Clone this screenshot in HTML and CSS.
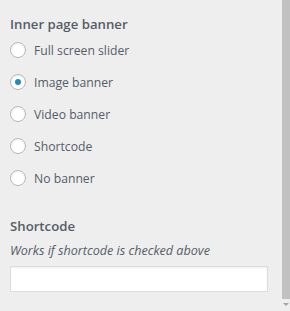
FILE: index.html
```html
<!DOCTYPE html>
<html>
<head>
<meta charset="utf-8">
<link rel="stylesheet" href="styles.css">
</head>
<body>
<div class="page">
  <div class="content">
    <div class="control">
      <div class="control-title">Inner page banner</div>
      <ul class="radio-list">
        <li class="radio"><span class="dot"></span><span class="label">Full screen slider</span></li>
        <li class="radio"><span class="dot checked"></span><span class="label">Image banner</span></li>
        <li class="radio"><span class="dot"></span><span class="label">Video banner</span></li>
        <li class="radio"><span class="dot"></span><span class="label">Shortcode</span></li>
        <li class="radio"><span class="dot"></span><span class="label">No banner</span></li>
      </ul>
    </div>
    <div class="control control-shortcode">
      <div class="control-title">Shortcode</div>
      <div class="desc">Works if shortcode is checked above</div>
      <div class="input"></div>
    </div>
  </div>
  <div class="scrollbar">
    <div class="thumb"></div>
    <div class="arrow"></div>
  </div>
</div>
</body>
</html>
```
FILE: styles.css
```css
html, body {
  margin: 0;
  padding: 0;
  background: #eeeeee;
}
body {
  font-family: "Open Sans", "Noto Sans", sans-serif;
  color: #555d66;
}
.page {
  display: flex;
  width: 290px;
  height: 311px;
  overflow: hidden;
}
.content {
  flex: 1;
  padding: 14px 10px 0 10px;
}
.control-title {
  font-size: 13.2px;
  font-weight: 600;
  line-height: 20px;
  color: #555d66;
}
.radio-list {
  list-style: none;
  margin: 0;
  padding: 0;
}
.radio {
  display: flex;
  align-items: center;
  height: 32px;
}
.dot {
  box-sizing: border-box;
  width: 16px;
  height: 16px;
  border-radius: 50%;
  border: 1px solid #b4b9be;
  background: #fff;
  box-shadow: inset 0 1px 2px rgba(0,0,0,0.07);
  margin-right: 8px;
  display: flex;
  align-items: center;
  justify-content: center;
}
.dot.checked::after {
  content: "";
  width: 6px;
  height: 6px;
  border-radius: 50%;
  background: #1e8cbe;
}
.label {
  font-size: 12.2px;
  color: #555d66;
}
.control-shortcode {
  margin-top: 22px;
}
.desc {
  font-size: 12.6px;
  font-style: italic;
  line-height: 20px;
  margin-top: 5px;
}
.input {
  box-sizing: border-box;
  height: 26px;
  width: 258px;
  margin-top: 5px;
  background: #fff;
  border: 1px solid #ddd;
  box-shadow: inset 0 1px 2px rgba(0,0,0,0.07);
}
.scrollbar {
  width: 8px;
  display: flex;
  flex-direction: column;
  align-items: center;
}
.thumb {
  width: 8px;
  height: 299px;
  background: #c1c1c1;
}
.arrow {
  margin-top: 4px;
  width: 0;
  height: 0;
  border-left: 3px solid transparent;
  border-right: 3px solid transparent;
  border-top: 3px solid #a3a3a3;
}
```
